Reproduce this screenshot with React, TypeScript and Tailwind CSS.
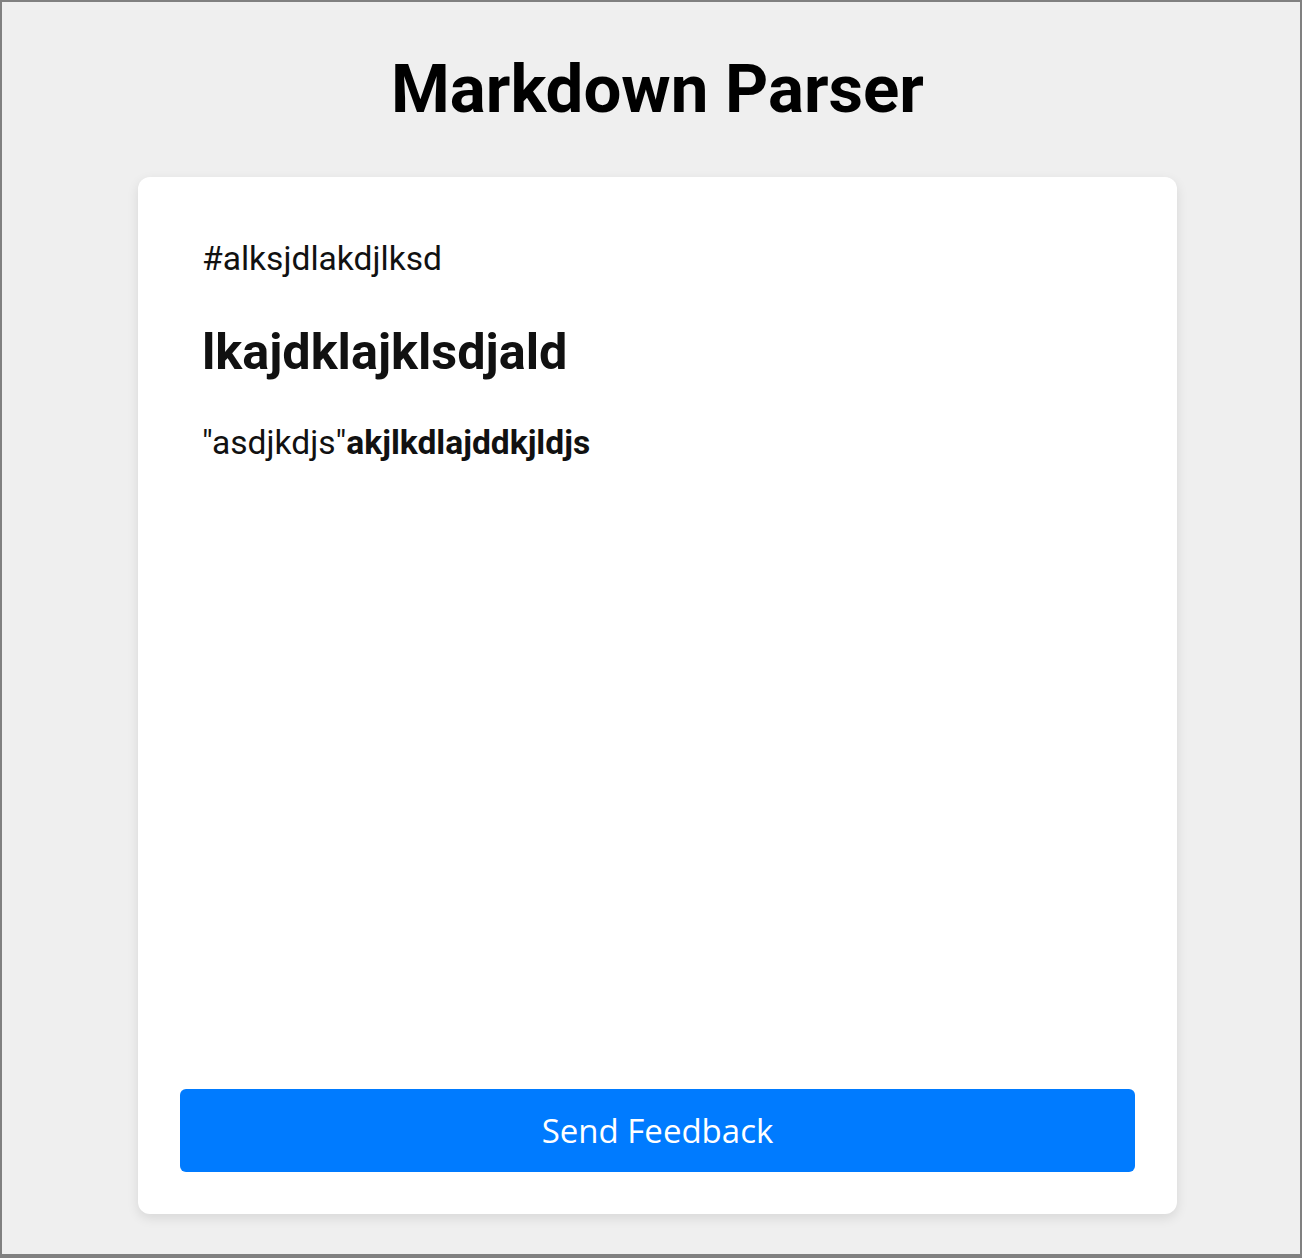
export default function App() {
  return (
    <div className="w-[1302px] h-[1258px] bg-[#efefef] border-2 border-b-4 border-[#808080] box-border overflow-hidden" style={{ fontFamily: "Roboto, 'Liberation Sans', sans-serif" }}>
      <div className="flex flex-col items-center pl-[13px]">
        <h1 className="mt-[48px] text-[67.2px] font-bold text-black leading-[79px]">Markdown Parser</h1>
        <div className="mt-[48px] w-[1039px] h-[1037px] bg-white rounded-[12px] shadow-[0_4px_12px_rgba(0,0,0,0.1)] p-[42px] flex flex-col">
          <div className="flex-1 px-[22px] text-[#111]">
            <p className="mt-[20px] text-[33.6px] leading-[39px]">#alksjdlakdjlksd</p>
            <h2 className="mt-[44px] text-[50.4px] font-bold leading-[59px]">lkajdklajklsdjald</h2>
            <p className="mt-[42px] text-[33.6px] leading-[39px]">
              "asdjkdjs"<strong className="font-bold">akjlkdlajddkjldjs</strong>
            </p>
          </div>
          <button className="h-[83px] w-full bg-[#007bff] rounded-[6px] text-white text-[33px] leading-none" style={{ fontFamily: "'Open Sans', 'Noto Sans', sans-serif" }}>
            Send Feedback
          </button>
        </div>
      </div>
    </div>
  );
}
